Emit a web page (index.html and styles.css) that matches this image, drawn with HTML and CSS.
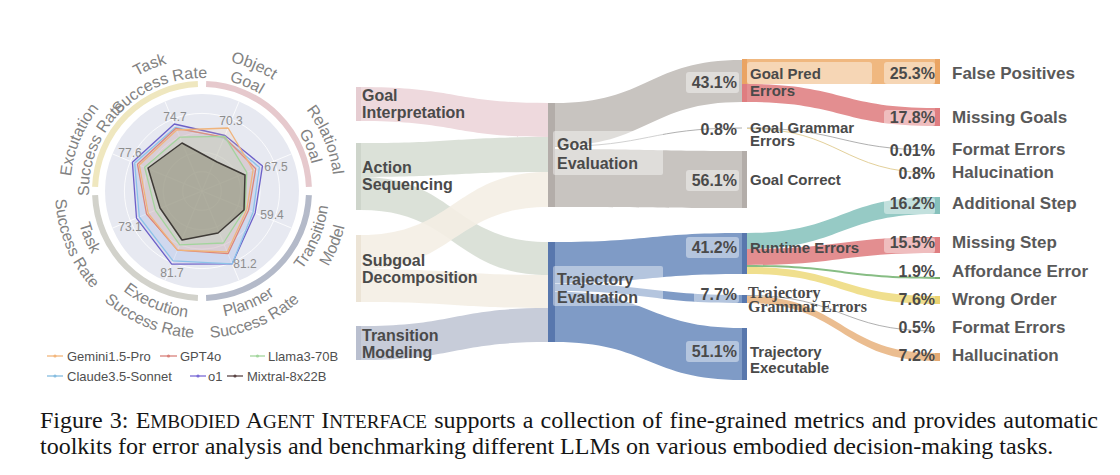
FILE: index.html
```html
<!DOCTYPE html>
<html lang="en">
<head>
<meta charset="utf-8">
<title>Figure 3</title>
<link rel="stylesheet" href="styles.css">
</head>
<body>
<div class="figure">
<svg class="chart" width="1120" height="408" viewBox="0 0 1120 408" xmlns="http://www.w3.org/2000/svg">
  <defs>
    <path id="t1i" d="M97.60 147.75 A113 113 0 0 1 245.25 86.60"/>
    <path id="t1o" d="M80.05 140.48 A132 132 0 0 1 252.52 69.05"/>
    <path id="t2i" d="M158.75 86.60 A113 113 0 0 1 306.40 147.75"/>
    <path id="t2o" d="M151.48 69.05 A132 132 0 0 1 323.95 140.48"/>
    <path id="t3i" d="M245.25 86.60 A113 113 0 0 1 306.40 234.25"/>
    <path id="t3o" d="M252.52 69.05 A132 132 0 0 1 323.95 241.52"/>
    <path id="t4i" d="M97.60 234.25 A113 113 0 0 1 158.75 86.60"/>
    <path id="t4o" d="M80.05 241.52 A132 132 0 0 1 151.48 69.05"/>
    <path id="b1i" d="M250.60 308.34 A127 127 0 0 0 319.34 142.40"/>
    <path id="b1o" d="M258.26 326.81 A147 147 0 0 0 337.81 134.74"/>
    <path id="b2i" d="M153.40 308.34 A127 127 0 0 0 319.34 239.60"/>
    <path id="b2o" d="M145.74 326.81 A147 147 0 0 0 337.81 247.26"/>
    <path id="b3i" d="M84.66 239.60 A127 127 0 0 0 250.60 308.34"/>
    <path id="b3o" d="M66.19 247.26 A147 147 0 0 0 258.26 326.81"/>
    <path id="b4i" d="M84.66 142.40 A127 127 0 0 0 153.40 308.34"/>
    <path id="b4o" d="M66.19 134.74 A147 147 0 0 0 145.74 326.81"/>
  </defs>

  <!-- ===== Radar chart ===== -->
  <g class="radar">
    <path class="ring ring-pink" d="M206.1 84.1 A107 107 0 0 1 308.9 186.9"/>
    <path class="ring ring-slate" d="M308.9 195.1 A107 107 0 0 1 206.1 297.9"/>
    <path class="ring ring-gray" d="M197.9 297.9 A107 107 0 0 1 95.1 195.1"/>
    <path class="ring ring-yellow" d="M95.1 186.9 A107 107 0 0 1 197.9 84.1"/>

    <circle class="disc" cx="202" cy="191" r="97"/>
    <circle class="grid" cx="202" cy="191" r="19.4"/>
    <circle class="grid" cx="202" cy="191" r="38.8"/>
    <circle class="grid" cx="202" cy="191" r="58.2"/>
    <circle class="grid" cx="202" cy="191" r="77.6"/>
    <path class="grid" d="M202 191 L239.12 101.38 M202 191 L291.62 153.88 M202 191 L291.62 228.12 M202 191 L239.12 280.62 M202 191 L164.88 280.62 M202 191 L112.38 228.12 M202 191 L112.38 153.88 M202 191 L164.88 101.38"/>

    <polygon class="poly p-o1" points="225.0,135.5 262.5,165.9 255.2,213.0 232.2,263.8 171.7,264.2 136.5,218.1 132.4,162.2 174.3,124.0"/>
    <polygon class="poly p-claude" points="223.9,138.2 259.4,167.2 253.1,212.2 232.2,263.8 173.0,260.9 139.3,217.0 134.7,163.1 175.6,127.3"/>
    <polygon class="poly p-gpt" points="224.3,137.2 255.8,168.7 248.6,210.3 228.0,253.7 177.5,250.1 146.5,214.0 137.5,164.3 176.0,128.3"/>
    <polygon class="poly p-gemini" points="228.1,128.0 253.1,169.8 246.8,209.6 227.3,252.0 177.5,250.1 148.2,213.3 139.3,165.0 176.7,130.0"/>
    <polygon class="poly p-llama" points="224.7,136.3 246.8,172.4 245.1,208.8 223.5,243.0 179.7,244.8 155.4,210.3 144.6,167.2 179.7,137.2"/>
    <polygon class="poly p-mixtral" points="182,143 217,162 245,175 244,210 218,233 182,240 160,208 148,168"/>

    <text class="val" x="175" y="121">74.7</text>
    <text class="val" x="231" y="125">70.3</text>
    <text class="val" x="276" y="171">67.5</text>
    <text class="val" x="272" y="219">59.4</text>
    <text class="val" x="245" y="268">81.2</text>
    <text class="val" x="172" y="277">81.7</text>
    <text class="val" x="130" y="231">73.1</text>
    <text class="val" x="130" y="157">77.6</text>

    <text class="axis"><textPath href="#t1o" startOffset="50%">Task</textPath></text>
    <text class="axis"><textPath href="#t1i" startOffset="50%">Success Rate</textPath></text>
    <text class="axis"><textPath href="#t2o" startOffset="50%">Object</textPath></text>
    <text class="axis"><textPath href="#t2i" startOffset="50%">Goal</textPath></text>
    <text class="axis"><textPath href="#t3o" startOffset="50%">Relational</textPath></text>
    <text class="axis"><textPath href="#t3i" startOffset="50%">Goal</textPath></text>
    <text class="axis"><textPath href="#t4o" startOffset="50%">Excutation</textPath></text>
    <text class="axis"><textPath href="#t4i" startOffset="50%">Success Rate</textPath></text>
    <text class="axis"><textPath href="#b1i" startOffset="50%">Transition</textPath></text>
    <text class="axis"><textPath href="#b1o" startOffset="50%">Model</textPath></text>
    <text class="axis"><textPath href="#b2i" startOffset="50%">Planner</textPath></text>
    <text class="axis"><textPath href="#b2o" startOffset="50%">Success Rate</textPath></text>
    <text class="axis"><textPath href="#b3i" startOffset="50%">Execution</textPath></text>
    <text class="axis"><textPath href="#b3o" startOffset="50%">Success Rate</textPath></text>
    <text class="axis"><textPath href="#b4i" startOffset="50%">Task</textPath></text>
    <text class="axis"><textPath href="#b4o" startOffset="50%">Success Rate</textPath></text>
  </g>

  <!-- Legend -->
  <g class="legend">
    <line class="lg l-gemini" x1="47" y1="356" x2="63" y2="356"/><circle class="dot d-gemini" cx="55" cy="356" r="1.6"/>
    <text class="lgt" x="67" y="361">Gemini1.5-Pro</text>
    <line class="lg l-gpt" x1="160" y1="356" x2="177" y2="356"/><circle class="dot d-gpt" cx="168.5" cy="356" r="1.6"/>
    <text class="lgt" x="180" y="361">GPT4o</text>
    <line class="lg l-llama" x1="250" y1="356" x2="265" y2="356"/><circle class="dot d-llama" cx="257.5" cy="356" r="1.6"/>
    <text class="lgt" x="268" y="361">Llama3-70B</text>
    <line class="lg l-claude" x1="47" y1="376" x2="63" y2="376"/><circle class="dot d-claude" cx="55" cy="376" r="1.6"/>
    <text class="lgt" x="67" y="381">Claude3.5-Sonnet</text>
    <line class="lg l-o1" x1="190" y1="376" x2="206" y2="376"/><circle class="dot d-o1" cx="198" cy="376" r="1.6"/>
    <text class="lgt" x="208" y="381">o1</text>
    <line class="lg l-mixtral" x1="227" y1="376" x2="243" y2="376"/><circle class="dot d-mixtral" cx="235" cy="376" r="1.6"/>
    <text class="lgt" x="247" y="381">Mixtral-8x22B</text>
  </g>

  <!-- ===== Sankey ===== -->
  <g class="sankey">
    <!-- level 0 flows -->
    <path class="f-pink" d="M361 87 C454.5 87 454.5 103 548 103 L548 137 C454.5 137 454.5 121 361 121 Z"/>
    <path class="f-green" d="M361 143 C454.5 143 454.5 137 548 137 L548 172 C454.5 172 454.5 177 361 177 Z"/>
    <path class="f-green" d="M361 177 C454.5 177 454.5 242 548 242 L548 275 C454.5 275 454.5 210 361 210 Z"/>
    <path class="f-beige" d="M361 235 C454.5 235 454.5 172 548 172 L548 207 C454.5 207 454.5 269 361 269 Z"/>
    <path class="f-beige" d="M361 269 C454.5 269 454.5 275 548 275 L548 308 C454.5 308 454.5 302 361 302 Z"/>
    <path class="f-slate" d="M361 326 C454.5 326 454.5 308 548 308 L548 342 C454.5 342 454.5 360 361 360 Z"/>

    <!-- level 1 flows -->
    <path class="f-gray" d="M555 103 C648.5 103 648.5 60 742 60 L742 102 C648.5 102 648.5 146 555 146 Z"/>
    <path class="f-line" d="M555 146.5 C648.5 146.5 648.5 128 742 128"/>
    <path class="f-gray" d="M555 149 C648.5 149 648.5 151 742 151 L742 208 C648.5 208 648.5 207 555 207 Z"/>
    <path class="f-blue" d="M555 242 C648.5 242 648.5 233 742 233 L742 274 C648.5 274 648.5 283 555 283 Z"/>
    <path class="f-blue" d="M555 283.5 C648.5 283.5 648.5 295 742 295 L742 303 C648.5 303 648.5 291 555 291 Z"/>
    <path class="f-blue" d="M555 291.5 C648.5 291.5 648.5 328 742 328 L742 380 C648.5 380 648.5 342 555 342 Z"/>

    <!-- level 2 flows -->
    <path class="f-orange" d="M747 59 L935 59 L935 84 L747 84 Z"/>
    <path class="f-red" d="M747 84 C841 84 841 108 935 108 L935 126 C841 126 841 102 747 102 Z"/>
    <path class="f-line" d="M747 128 C841 128 841 150 935 150"/>
    <path class="f-line-y" d="M747 128.5 C841 128.5 841 173 935 173"/>
    <path class="f-teal" d="M747 233 C841 233 841 197 935 197 L935 214 C841 214 841 249 747 249 Z"/>
    <path class="f-red" d="M747 249 C841 249 841 237 935 237 L935 253 C841 253 841 265 747 265 Z"/>
    <path class="f-grn" d="M747 265 C841 265 841 277 935 277 L935 279 C841 279 841 267 747 267 Z"/>
    <path class="f-yel" d="M747 267 C841 267 841 296 935 296 L935 304 C841 304 841 274 747 274 Z"/>
    <path class="f-line" d="M747 295.5 C841 295.5 841 331 935 331"/>
    <path class="f-tan" d="M747 296 C841 296 841 353 935 353 L935 361 C841 361 841 303 747 303 Z"/>

    <!-- nodes -->
    <rect class="n-pink" x="356" y="87" width="5" height="34"/>
    <rect class="n-green" x="356" y="143" width="5" height="67"/>
    <rect class="n-beige" x="356" y="235" width="5" height="67"/>
    <rect class="n-slate" x="356" y="326" width="5" height="34"/>
    <rect class="n-gray" x="548" y="103" width="7" height="104"/>
    <rect class="n-blue" x="548" y="242" width="7" height="100"/>
    <rect class="n-orange" x="742" y="59" width="5" height="25"/>
    <rect class="n-red" x="742" y="84" width="5" height="18"/>
    <rect class="n-gray" x="742" y="151" width="5" height="57"/>
    <rect class="n-blue" x="742" y="233" width="5" height="41"/>
    <rect class="n-blue" x="742" y="295" width="5" height="8"/>
    <rect class="n-blue" x="742" y="328" width="5" height="52"/>
    <rect class="n-orange" x="935" y="59" width="5" height="25"/>
    <rect class="n-red" x="935" y="108" width="5" height="18"/>
    <rect class="n-teal" x="935" y="197" width="5" height="17"/>
    <rect class="n-red" x="935" y="237" width="5" height="16"/>
    <rect class="n-grn" x="935" y="277" width="5" height="2"/>
    <rect class="n-yel" x="935" y="296" width="5" height="8"/>
    <rect class="n-tan" x="935" y="353" width="5" height="8"/>

    <!-- label boxes -->
    <rect class="box" x="553" y="131" width="110" height="44" rx="2"/>
    <rect class="box" x="553" y="266" width="110" height="40" rx="2"/>
    <rect class="box" x="686" y="72" width="53" height="21" rx="3"/>
    <rect class="box" x="686" y="170" width="53" height="21" rx="3"/>
    <rect class="box" x="686" y="237" width="53" height="21" rx="3"/>
    <rect class="box" x="694" y="288" width="45" height="15" rx="3"/>
    <rect class="box" x="686" y="341" width="53" height="21" rx="3"/>
    <rect class="box" x="747" y="62" width="125" height="22" rx="3"/>
    <rect class="box" x="884" y="62" width="51" height="22" rx="3"/>
    <rect class="box" x="884" y="110" width="51" height="16" rx="3"/>
    <rect class="box" x="884" y="198" width="51" height="16" rx="3"/>
    <rect class="box" x="884" y="238" width="51" height="15" rx="3"/>

    <!-- left labels -->
    <text class="sk-l" x="362" y="101">Goal</text>
    <text class="sk-l" x="362" y="118">Interpretation</text>
    <text class="sk-l" x="362" y="173">Action</text>
    <text class="sk-l" x="362" y="190">Sequencing</text>
    <text class="sk-l" x="362" y="266">Subgoal</text>
    <text class="sk-l" x="362" y="283">Decomposition</text>
    <text class="sk-l" x="362" y="341">Transition</text>
    <text class="sk-l" x="362" y="358">Modeling</text>

    <text class="sk-l" x="557" y="150">Goal</text>
    <text class="sk-l" x="557" y="169">Evaluation</text>
    <text class="sk-l" x="557" y="285">Trajectory</text>
    <text class="sk-l" x="557" y="303">Evaluation</text>

    <!-- middle percentages -->
    <text class="pct" x="737" y="88">43.1%</text>
    <text class="pct" x="737" y="135">0.8%</text>
    <text class="pct" x="737" y="186">56.1%</text>
    <text class="pct" x="737" y="253">41.2%</text>
    <text class="pct" x="737" y="300">7.7%</text>
    <text class="pct" x="737" y="357">51.1%</text>

    <!-- middle node labels -->
    <text class="sk-m" x="750" y="79">Goal Pred</text>
    <text class="sk-m" x="750" y="96">Errors</text>
    <text class="sk-m" x="750" y="133">Goal Grammar</text>
    <text class="sk-m" x="750" y="146">Errors</text>
    <text class="sk-m" x="750" y="185">Goal Correct</text>
    <text class="sk-m" x="750" y="253">Runtime Errors</text>
    <text class="sk-serif" x="748" y="298">Trajectory</text>
    <text class="sk-serif" x="748" y="312">Grammar Errors</text>
    <text class="sk-m" x="750" y="357">Trajectory</text>
    <text class="sk-m" x="750" y="373">Executable</text>

    <!-- right percentages -->
    <text class="pct" x="935" y="79">25.3%</text>
    <text class="pct" x="935" y="123">17.8%</text>
    <text class="pct" x="935" y="156">0.01%</text>
    <text class="pct" x="935" y="179">0.8%</text>
    <text class="pct" x="935" y="209">16.2%</text>
    <text class="pct" x="935" y="248">15.5%</text>
    <text class="pct" x="935" y="277">1.9%</text>
    <text class="pct" x="935" y="305">7.6%</text>
    <text class="pct" x="935" y="333">0.5%</text>
    <text class="pct" x="935" y="361">7.2%</text>

    <!-- right labels -->
    <text class="sk-r" x="952" y="79">False Positives</text>
    <text class="sk-r" x="952" y="123">Missing Goals</text>
    <text class="sk-r" x="952" y="155">Format Errors</text>
    <text class="sk-r" x="952" y="178">Halucination</text>
    <text class="sk-r" x="952" y="209">Additional Step</text>
    <text class="sk-r" x="952" y="248">Missing Step</text>
    <text class="sk-r" x="952" y="277">Affordance Error</text>
    <text class="sk-r" x="952" y="305">Wrong Order</text>
    <text class="sk-r" x="952" y="333">Format Errors</text>
    <text class="sk-r" x="952" y="361">Hallucination</text>
  </g>
</svg>
<p class="caption"><span class="line line-1">Figure 3: E<span class="scs">mbodied</span> A<span class="scs">gent</span> I<span class="scs">nterface</span> supports a collection of fine-grained metrics and provides automatic</span><span class="line line-2">toolkits for error analysis and benchmarking different LLMs on various embodied decision-making tasks.</span></p>
</div>
</body>
</html>
```

FILE: styles.css
```css
html, body {
  margin: 0;
  padding: 0;
  background: #ffffff;
}

.figure {
  width: 1120px;
  height: 475px;
  overflow: hidden;
}

.chart {
  display: block;
}

/* ---------- radar ---------- */
.ring {
  fill: none;
  stroke-width: 6;
}
.ring-pink { stroke: #e6c9cd; }
.ring-slate { stroke: #b4bac9; }
.ring-gray { stroke: #d2d2cb; }
.ring-yellow { stroke: #efe7bf; }

.disc { fill: #e7e9f1; }
.grid {
  fill: none;
  stroke: #ffffff;
  stroke-width: 1;
  opacity: 0.8;
}

.poly { stroke-width: 1.3; stroke-linejoin: round; }
.p-o1 { stroke: #6c60c8; fill: #8b80e0; fill-opacity: 0.12; }
.p-claude { stroke: #8cc3e8; fill: #9cc9ec; fill-opacity: 0.18; }
.p-gpt { stroke: #dd8679; fill: #eaa094; fill-opacity: 0.16; }
.p-gemini { stroke: #f0b47c; fill: #f5c79a; fill-opacity: 0.14; }
.p-llama { stroke: #a3d49d; fill: #b7dcae; fill-opacity: 0.25; }
.p-mixtral { stroke: #3e3a36; stroke-width: 1.5; fill: #7f7c64; fill-opacity: 0.45; }

.val {
  font-family: "Liberation Sans", Arial, sans-serif;
  font-size: 12px;
  fill: #8d8d8d;
  text-anchor: middle;
}

.axis {
  font-family: "Liberation Sans", Arial, sans-serif;
  font-size: 16px;
  fill: #828282;
  text-anchor: middle;
}

/* legend */
.lg { stroke-width: 1.3; }
.lgt {
  font-family: "Liberation Sans", Arial, sans-serif;
  font-size: 13px;
  fill: #4f4f4f;
}
.l-gemini { stroke: #f3b67c; } .d-gemini { fill: #f3b67c; }
.l-gpt { stroke: #d8817a; } .d-gpt { fill: #d8817a; }
.l-llama { stroke: #a2d69d; } .d-llama { fill: #a2d69d; }
.l-claude { stroke: #86bde0; } .d-claude { fill: #86bde0; }
.l-o1 { stroke: #7a6bd6; } .d-o1 { fill: #7a6bd6; }
.l-mixtral { stroke: #5a4444; } .d-mixtral { fill: #5a4444; }

/* ---------- sankey ---------- */
.f-pink { fill: #eed9dd; }
.f-green { fill: #d9dfd6; opacity: 0.95; }
.f-beige { fill: #f4eee4; opacity: 0.9; }
.f-slate { fill: #c7ccd9; }
.f-gray { fill: #c8c4c0; }
.f-blue { fill: #7f9bc6; }
.f-orange { fill: #f0b880; }
.f-red { fill: #e38e90; }
.f-teal { fill: #96cac5; }
.f-grn { fill: #87bd84; }
.f-yel { fill: #f0df8e; }
.f-tan { fill: #ebbd90; }
.f-line { fill: none; stroke: #9c9c9c; stroke-width: 0.8; }
.f-line-y { fill: none; stroke: #e3d09a; stroke-width: 1; }

.n-pink { fill: #e6cdd2; }
.n-green { fill: #ced5cb; }
.n-beige { fill: #ece4d6; }
.n-slate { fill: #b9bfcf; }
.n-gray { fill: #b3ada9; }
.n-blue { fill: #5877ad; }
.n-orange { fill: #eaa463; }
.n-red { fill: #df7d80; }
.n-teal { fill: #86c1bc; }
.n-grn { fill: #73ad70; }
.n-yel { fill: #ead372; }
.n-tan { fill: #e4aa74; }

.box { fill: #ffffff; fill-opacity: 0.42; }

.sk-l, .sk-m, .pct, .sk-r {
  font-family: "Liberation Sans", Arial, sans-serif;
  font-weight: bold;
  fill: #4a4a4a;
}
.sk-l { font-size: 16px; }
.sk-m { font-size: 15px; }
.pct { font-size: 16px; text-anchor: end; }
.sk-r { font-size: 17px; fill: #595959; }
.sk-serif {
  font-family: "Liberation Serif", "Times New Roman", serif;
  font-weight: bold;
  font-size: 16px;
  fill: #4a4a4a;
}

/* ---------- caption ---------- */
.caption {
  margin: 0;
  padding-left: 40px;
  width: 1058px;
  font-family: "Liberation Serif", "Times New Roman", serif;
  font-size: 24px;
  line-height: 25px;
  color: #151515;
}
.line { display: block; white-space: nowrap; }
.line-1 {
  text-align: justify;
  text-align-last: justify;
  white-space: normal;
}
.scs {
  font-size: 0.8em;
  text-transform: uppercase;
}
```
